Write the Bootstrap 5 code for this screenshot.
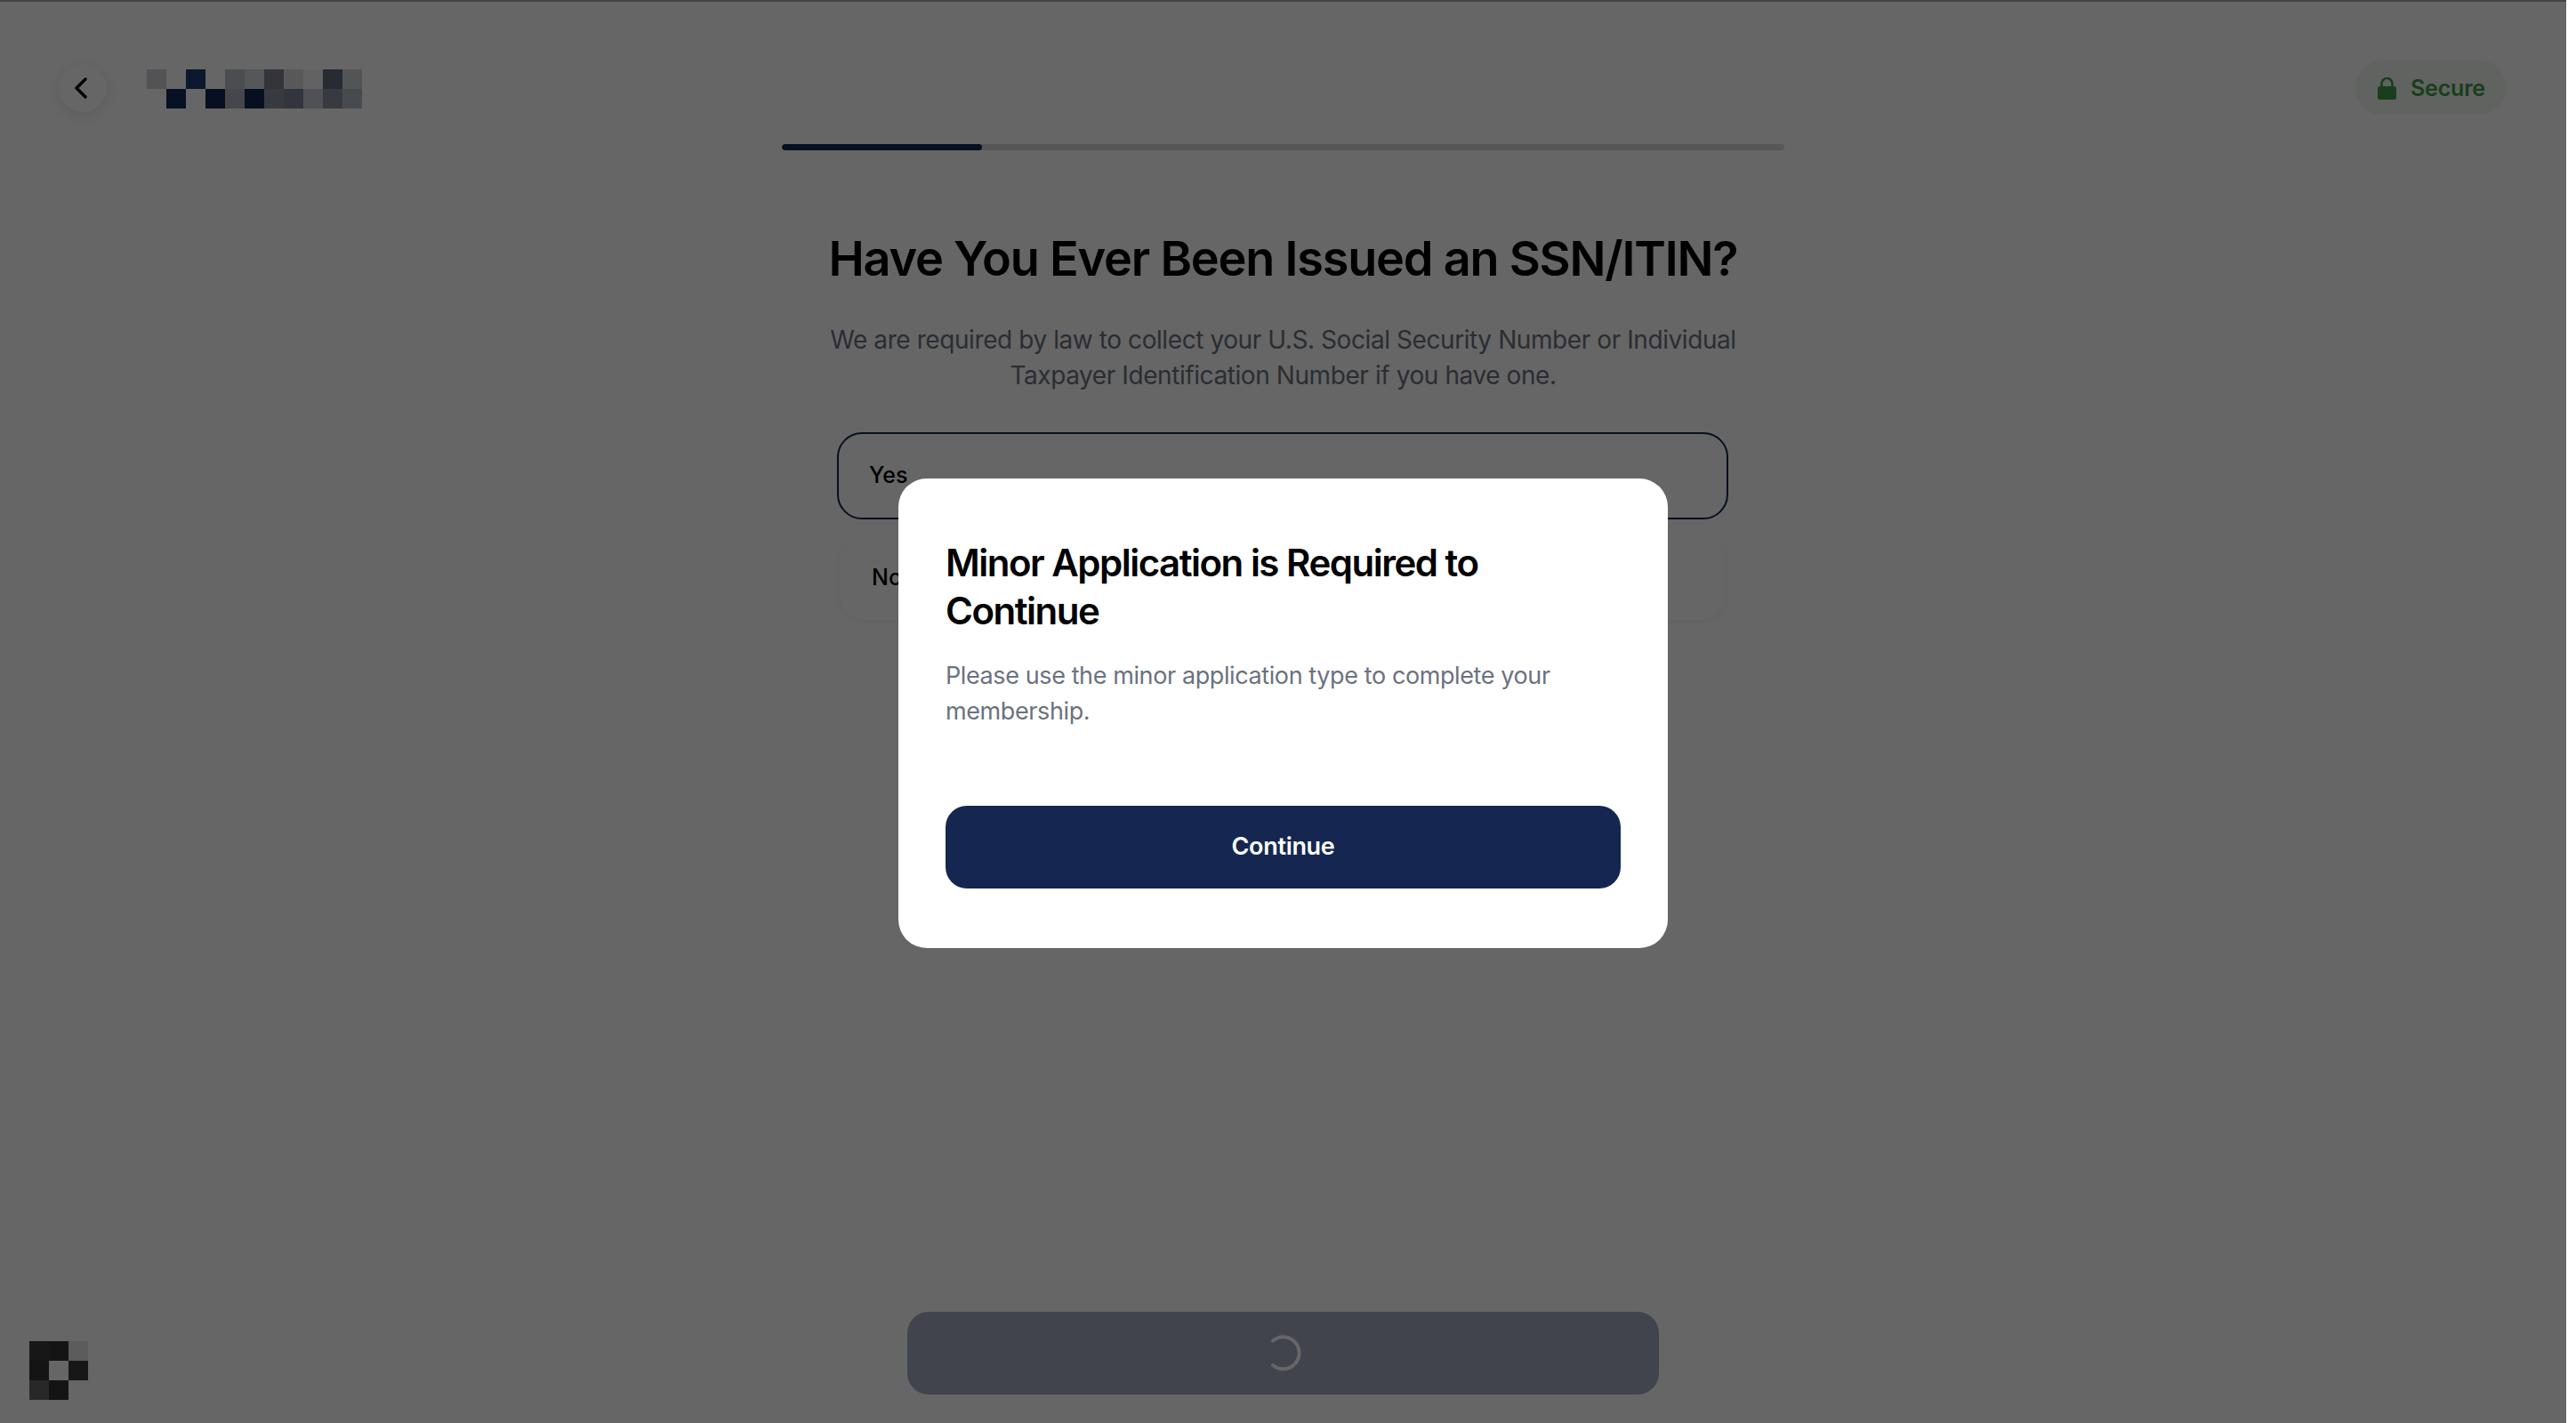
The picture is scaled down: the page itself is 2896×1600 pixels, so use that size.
<!DOCTYPE html>
<html lang="en">
<head>
    <meta charset="UTF-8">
    <title>Have You Ever Been Issued an SSN/ITIN?</title>
    <link href="https://cdn.jsdelivr.net/npm/bootstrap@5.3.0/dist/css/bootstrap.min.css" rel="stylesheet">
    <style>
        body { font-family: Inter, "Liberation Sans", sans-serif; background: #fff; height: 1600px; overflow: hidden; }
        .page-area { width: 2885px; height: 1600px; border-top: 2px solid #aaa; }
        .top-bar { padding: 70px 67px 0 66px; height: 160px; }
        .back-btn { width: 54px; height: 54px; background: #fff; border: 0; padding: 0 4px 0 0; box-shadow: 0 4px 16px rgba(0,0,0,.1); }
        .logo-grid { display: grid; margin: 6px 0 0 45px; grid-template-columns: repeat(11, 22px); grid-auto-rows: 22px; }
        .secure-pill { height: 61px; width: 171px; background: #f2f8ef; color: #3f9b4d; font-size: 25px; font-weight: 600; letter-spacing: -.2px; gap: 16px; margin-top: -4px; padding: 2px 0 0 2px; }
        .progress-track { width: 1127px; height: 7px; background: #d9d9de; }
        .progress-fill { width: 225px; background: #152750; }
        .question-title { font-size: 54px; font-weight: 600; line-height: 70px; letter-spacing: -1.2px; margin: 87px 0 0; color: #000; }
        .question-text { font-size: 28px; line-height: 40px; color: #6b7280; letter-spacing: -.42px; margin: 36px 0 0; width: 1040px; }
        .answer { width: 1002px; font-size: 25px; font-weight: 500; color: #000; padding-left: 34px; background: #fff; margin-left: -1px; }
        .answer-on { height: 98px; border: 2px solid #152750; border-radius: 28px; margin-top: 44px; }
        .answer-off { height: 94px; width: 996px; border-radius: 28px; margin-top: 19px; padding-left: 36px; box-shadow: 0 2px 10px rgba(0,0,0,.05); }
        .bottom-btn { width: 845px; height: 93px; left: 1020px; top: 1475px; background: #a3aac0; border-radius: 24px; }
        .corner-logo { left: 33px; top: 1508px; display: grid; grid-template-columns: repeat(3, 22px); grid-auto-rows: 22px; }
        .dim-layer { background: rgba(0,0,0,.6); width: 2885px; z-index: 10; }
        .popup { left: 1010px; top: 538px; width: 865px; height: 528px; background: #fff; border-radius: 32px; padding: 68px 53px 0; z-index: 20; }
        .popup-title { font-size: 42px; line-height: 54px; font-weight: 600; letter-spacing: -1.5px; color: #000; margin: 0; }
        .popup-text { font-size: 27px; line-height: 40px; color: #6b7280; letter-spacing: -.4px; margin: 26px 0 0; }
        .popup-btn { height: 93px; margin-top: 86px; background: #152750; border: 0; border-radius: 24px; color: #fff; font-size: 27px; font-weight: 600; letter-spacing: -.3px; }
        .popup-btn:hover { background: #152750; color: #fff; }
    </style>
</head>
<body>
    <div class="page-area d-flex flex-column align-items-center">
        <div class="top-bar w-100 d-flex align-items-start">
            <button class="back-btn rounded-circle d-flex align-items-center justify-content-center" aria-label="Back">
                <svg width="16" height="24" viewBox="0 0 16 24" fill="none" stroke="#000" stroke-width="3.4" stroke-linecap="round" stroke-linejoin="round"><path d="M13 2 3 12l10 10"/></svg>
            </button>
            <div class="logo-grid" id="logoGrid"></div>
            <div class="secure-pill rounded-pill d-flex align-items-center justify-content-center ms-auto">
                <svg width="21" height="25" viewBox="0 0 21 25"><path d="M4.5 11V7a6 6 0 0 1 12 0v4" fill="none" stroke="#3f9b4d" stroke-width="2.6"/><rect y="10" width="21" height="15" rx="2.5" fill="#3f9b4d"/></svg>
                <span>Secure</span>
            </div>
        </div>
        <div class="progress-track rounded-pill d-flex overflow-hidden">
            <div class="progress-fill rounded-pill"></div>
        </div>
        <h1 class="question-title text-center">Have You Ever Been Issued an SSN/ITIN?</h1>
        <p class="question-text text-center">We are required by law to collect your U.S. Social Security Number or Individual Taxpayer Identification Number if you have one.</p>
        <div class="answer answer-on d-flex align-items-center">Yes</div>
        <div class="answer answer-off d-flex align-items-center">No</div>
    </div>

    <div class="bottom-btn position-absolute"></div>
    <div class="corner-logo position-absolute" id="cornerLogo"></div>

    <div class="dim-layer position-absolute top-0 start-0 h-100"></div>

    <svg class="position-absolute" style="left:1421px;top:1500px;z-index:11" width="44" height="44" viewBox="0 0 44 44" fill="none"><path d="M10 7.5A18 18 0 1 1 10 35" stroke="#666" stroke-width="4" stroke-linecap="round"/></svg>

    <div class="popup position-absolute d-flex flex-column">
        <h2 class="popup-title">Minor Application is Required to Continue</h2>
        <p class="popup-text">Please use the minor application type to complete your membership.</p>
        <button class="btn popup-btn w-100">Continue</button>
    </div>

    <script src="https://cdn.jsdelivr.net/npm/bootstrap@5.3.0/dist/js/bootstrap.bundle.min.js"></script>
    <script>
        // pixelated logo cells, colours are before the dim layer
        const fillCells = (id, cells) => {
            const box = document.getElementById(id);
            cells.forEach((c) => {
                const d = document.createElement('div');
                d.style.background = c;
                box.appendChild(d);
            });
        };
        fillCells('logoGrid', [
            '#cfd0d6', 'transparent', '#1f3c70', 'transparent', '#bbc1c8', '#d7d9de', '#7f8694', '#dcddde', '#f2f4f2', '#606b82', '#d0d1d8',
            'transparent', '#142b57', 'transparent', '#132a52', '#acb1be', '#122a50', '#8a93a1', '#7d8493', '#c8cbd1', '#8a93a1', '#b5bcc1'
        ]);
        fillCells('cornerLogo', [
            '#3a3a3a', '#333', '#e6e6e6',
            '#333', '#fff', '#3a3a3a',
            '#646464', '#333', 'transparent'
        ]);
    </script>
</body>
</html>
